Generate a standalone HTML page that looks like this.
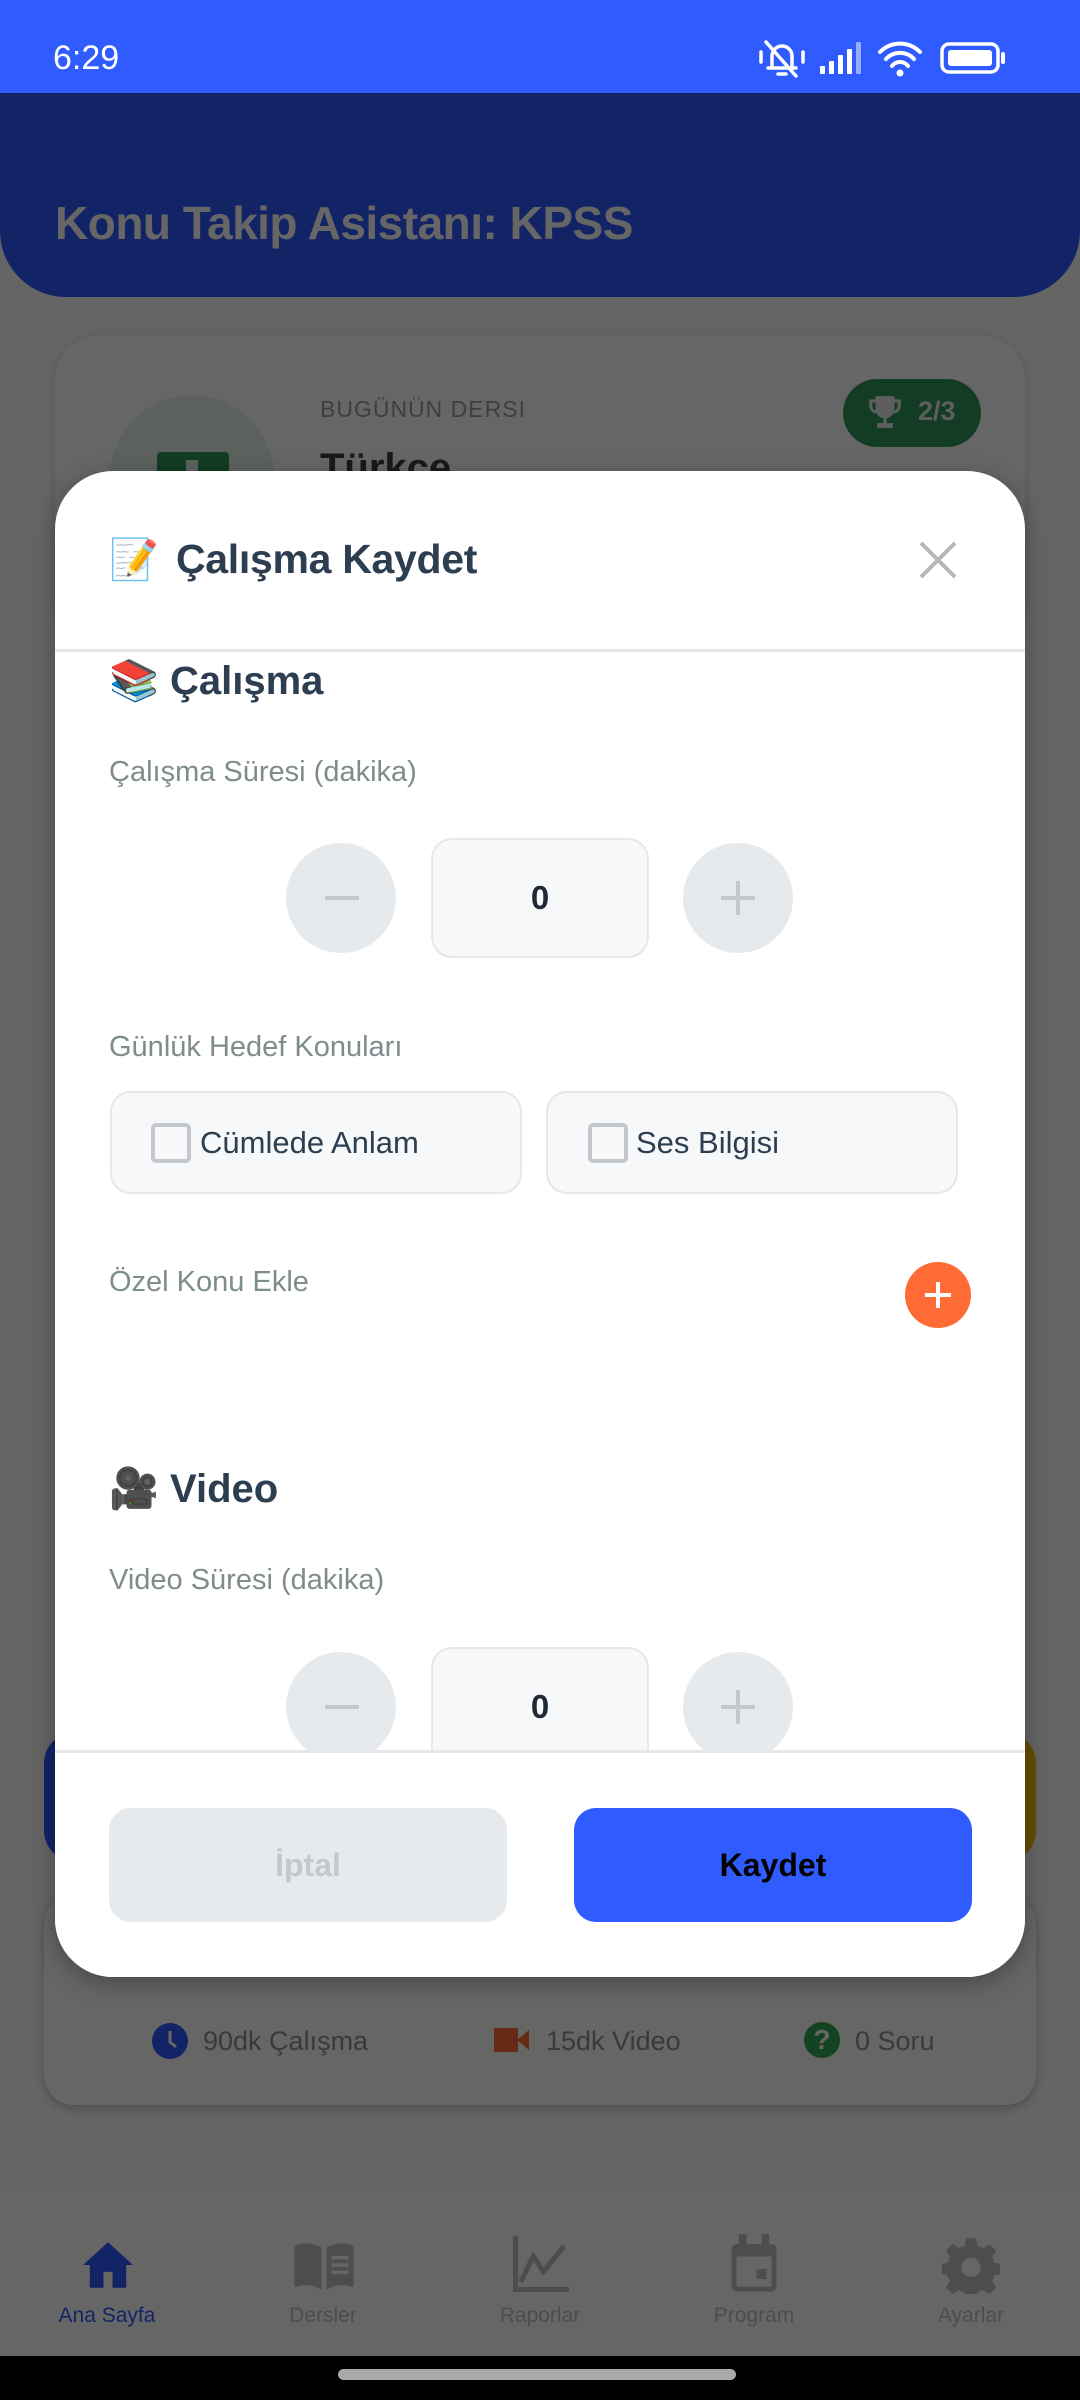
<!DOCTYPE html>
<html><head><meta charset="utf-8"><style>
*{margin:0;padding:0;box-sizing:border-box}
html,body{background:#fff}
body{width:1080px;height:2400px;position:relative;overflow:hidden;font-family:"Liberation Sans","Noto Sans CJK JP",sans-serif}
.a{position:absolute}
.t{white-space:nowrap}
</style></head><body>
<!-- underlying page -->
<div class="a" style="left:0;top:0;width:1080px;height:2400px;background:#fcfcfc"></div>
<div class="a" style="left:0;top:93px;width:1080px;height:204px;background:#2f5bff;border-radius:0 0 66px 66px"></div>
<div class="a t" style="left:55px;top:196px;font-size:46px;font-weight:bold;color:#fff;letter-spacing:-0.5px">Konu Takip Asistanı: KPSS</div>
<div class="a" style="left:55px;top:335px;width:970px;height:300px;background:#fff;border-radius:44px;box-shadow:0 2px 10px rgba(0,0,0,.15)"></div>
<div class="a" style="left:110px;top:395px;width:164px;height:164px;border-radius:50%;background:#e8f3ea"></div>
<div class="a" style="left:157px;top:452px;width:72px;height:40px;background:#2d9a5a;border-radius:4px"></div>
<div class="a" style="left:186px;top:460px;width:12px;height:40px;background:#e8f3ea"></div>
<div class="a t" style="left:320px;top:396px;font-size:23px;color:#9d9d9d;letter-spacing:1px">BUGÜNÜN DERSI</div>
<div class="a t" style="left:320px;top:446px;font-size:40px;font-weight:bold;color:#404040">Türkçe</div>
<div class="a" style="left:843px;top:379px;width:138px;height:68px;border-radius:34px;background:#2d9a5a"></div>
<svg class="a" style="left:866px;top:392px" width="38" height="40" viewBox="0 0 24 24"><path fill="#eaeaea" d="M6 2h12v2h4v4a5 5 0 0 1-5 5 6 6 0 0 1-4 3v3h4v3H7v-3h4v-3a6 6 0 0 1-4-3 5 5 0 0 1-5-5V4h4zM4 6v2a3 3 0 0 0 2 3V6zm16 0h-2v5a3 3 0 0 0 2-3z"/></svg>
<div class="a t" style="left:918px;top:396px;font-size:27px;font-weight:bold;color:#eaeaea">2/3</div>
<div class="a" style="left:44px;top:1733px;width:992px;height:128px;border-radius:30px;background:linear-gradient(90deg,#2f5bff 0 50%,#ffc107 50% 100%)"></div>
<div class="a" style="left:44px;top:1895px;width:992px;height:210px;background:#fff;border-radius:30px;box-shadow:0 3px 10px rgba(0,0,0,.25)"></div>
<svg class="a" style="left:151px;top:2022px" width="38" height="38" viewBox="0 0 38 38"><circle cx="19" cy="19" r="18" fill="#2f5bff"/><path d="M19 9V20L25 25" stroke="#fff" stroke-width="3" fill="none"/></svg>
<div class="a t" style="left:203px;top:2026px;font-size:27px;color:#919191">90dk Çalışma</div>
<svg class="a" style="left:494px;top:2026px" width="36" height="28" viewBox="0 0 36 28"><rect x="0" y="2" width="24" height="24" fill="#ff6b35"/><path d="M23 14L35 4V24z" fill="#ff6b35"/></svg>
<div class="a t" style="left:546px;top:2026px;font-size:27px;color:#919191">15dk Video</div>
<div class="a" style="left:804px;top:2022px;width:36px;height:36px;border-radius:50%;background:#34a853;color:#fff;font-size:28px;font-weight:bold;text-align:center;line-height:36px">?</div>
<div class="a t" style="left:855px;top:2026px;font-size:27px;color:#919191">0 Soru</div>
<div class="a" style="left:0;top:2190px;width:1080px;height:166px;background:#fff;border-top:1px solid #eee"></div>
<svg class="a" style="left:80px;top:2240px" width="56" height="50" viewBox="0 0 24 22"><path fill="#2f5bff" d="M12 1 L23 11 H20 V21 H14 V14 H10 V21 H4 V11 H1z"/></svg>
<svg class="a" style="left:292px;top:2240px" width="64" height="50" viewBox="0 0 26 20"><path fill="#c0c0c0" d="M1 2 Q7 0 12 3 V20 Q7 17 1 19z M14 3 Q19 0 25 2 V19 Q19 17 14 20z"/><path stroke="#fff" stroke-width="1.4" d="M16 7h7M16 10h7M16 13h7"/></svg>
<svg class="a" style="left:510px;top:2236px" width="62" height="56" viewBox="0 0 24 22"><path fill="none" stroke="#c0c0c0" stroke-width="2" d="M2 0V21H23 M4 18 L9 8 L13 14 L21 4"/></svg>
<svg class="a" style="left:728px;top:2234px" width="52" height="60" viewBox="0 0 20 24"><rect x="1" y="4" width="18" height="19" rx="2" fill="#c0c0c0"/><rect x="3" y="9" width="14" height="12" fill="#fff"/><rect x="4" y="0" width="3" height="6" fill="#c0c0c0"/><rect x="13" y="0" width="3" height="6" fill="#c0c0c0"/><rect x="11" y="14" width="4" height="4" fill="#c0c0c0"/></svg>
<svg class="a" style="left:942px;top:2236px" width="58" height="58" viewBox="0 0 24 24"><path fill="#c0c0c0" d="M10 1h4l.6 3 2.4 1 2.6-1.7 2.8 2.8L20.7 8.7l1 2.4 3 .6v4l-3 .6-1 2.4 1.7 2.6-2.8 2.8-2.6-1.7-2.4 1-.6 3h-4l-.6-3-2.4-1-2.6 1.7-2.8-2.8 1.7-2.6-1-2.4-3-.6v-4l3-.6 1-2.4L1.6 6.1 4.4 3.3 7 5l2.4-1z"/><circle cx="12" cy="13" r="4" fill="#fff"/></svg>
<div class="a t" style="left:0;top:2304px;width:214px;text-align:center;font-size:21px;color:#2f5bff">Ana Sayfa</div>
<div class="a t" style="left:216px;top:2304px;width:214px;text-align:center;font-size:21px;color:#c0c0c0">Dersler</div>
<div class="a t" style="left:433px;top:2304px;width:214px;text-align:center;font-size:21px;color:#c0c0c0">Raporlar</div>
<div class="a t" style="left:647px;top:2304px;width:214px;text-align:center;font-size:21px;color:#c0c0c0">Program</div>
<div class="a t" style="left:864px;top:2304px;width:214px;text-align:center;font-size:21px;color:#c0c0c0">Ayarlar</div>
<!-- dim overlay -->
<div class="a" style="left:0;top:0;width:1080px;height:2400px;background:rgba(0,0,0,0.6)"></div>
<!-- status bar -->
<div class="a" style="left:0;top:0;width:1080px;height:93px;background:#2f5bff"></div>
<div class="a t" style="left:53px;top:38px;font-size:34px;color:#fff;line-height:40px">6:29</div>
<svg class="a" style="left:758px;top:36px" width="260" height="44" viewBox="0 0 260 44">
 <g fill="none" stroke="#fff" stroke-width="3.5" stroke-linecap="round">
  <path d="M14 32 V20 a10 10 0 0 1 20 0 V32 H10 M38 32 H34"/><path d="M8 6 L38 40"/><path d="M3 16v10M45 16v10"/>
  <path d="M20 38h8"/>
 </g>
 <g fill="#fff"><rect x="62" y="30" width="5" height="8" rx="1"/><rect x="71" y="25" width="5" height="13" rx="1"/><rect x="80" y="19" width="5" height="19" rx="1"/><rect x="89" y="13" width="5" height="25" rx="1"/><rect x="98" y="6" width="5" height="32" rx="1" opacity=".5"/></g>
 <g fill="none" stroke="#fff" stroke-width="4" stroke-linecap="round">
  <path d="M122 16 a28 28 0 0 1 40 0"/><path d="M128 23 a19 19 0 0 1 28 0"/><path d="M134 30 a10 10 0 0 1 16 0"/>
 </g><circle cx="142" cy="37" r="3.5" fill="#fff"/>
 <rect x="184" y="8" width="56" height="28" rx="7" fill="none" stroke="#fff" stroke-width="3.5"/>
 <rect x="190" y="14" width="44" height="16" rx="3" fill="#fff"/>
 <rect x="243" y="16" width="4" height="12" rx="2" fill="#fff"/>
</svg>
<div class="a" style="left:0;top:2356px;width:1080px;height:44px;background:#000"></div>
<div class="a" style="left:338px;top:2369px;width:398px;height:11px;border-radius:6px;background:#aaa"></div>
<!-- modal -->
<div class="a" style="left:55px;top:471px;width:970px;height:1506px;background:#fff;border-radius:58px;overflow:hidden;box-shadow:0 6px 24px rgba(0,0,0,.3)">
 <div class="a t" style="left:54px;top:63px;font-size:40px;line-height:52px">📝</div>
 <div class="a t" style="left:121px;top:62px;font-size:41px;font-weight:bold;color:#2c3e50;line-height:52px;letter-spacing:-0.3px">Çalışma Kaydet</div>
 <svg class="a" style="left:863px;top:69px" width="40" height="40" viewBox="0 0 40 40"><path d="M3 3L37 37M37 3L3 37" stroke="#b4b8bb" stroke-width="4"/></svg>
 <div class="a" style="left:0;top:178px;width:970px;height:3px;background:#e5e7eb"></div>
 <div class="a t" style="left:54px;top:184px;font-size:40px;line-height:52px">📚</div>
 <div class="a t" style="left:115px;top:184px;font-size:40px;font-weight:bold;color:#2c3e50;line-height:52px">Çalışma</div>
 <div class="a t" style="left:54px;top:285px;font-size:29px;color:#7f8c8d">Çalışma Süresi (dakika)</div>
 <div class="a" style="left:231px;top:372px;width:110px;height:110px;border-radius:50%;background:#e7eaed"></div>
 <div class="a" style="left:270px;top:425px;width:34px;height:4px;background:#c4c8cc"></div>
 <div class="a" style="left:376px;top:367px;width:218px;height:120px;border-radius:21px;background:#f7f8fa;border:2px solid #e5e7eb;text-align:center;line-height:116px;font-size:33px;font-weight:bold;color:#1f2937">0</div>
 <div class="a" style="left:628px;top:372px;width:110px;height:110px;border-radius:50%;background:#e7eaed"></div>
 <div class="a" style="left:666px;top:425px;width:34px;height:4px;background:#c4c8cc"></div>
 <div class="a" style="left:681px;top:410px;width:4px;height:34px;background:#c4c8cc"></div>
 <div class="a t" style="left:54px;top:560px;font-size:29px;color:#7f8c8d">Günlük Hedef Konuları</div>
 <div class="a" style="left:55px;top:620px;width:412px;height:103px;border-radius:21px;background:#f7f8fa;border:2px solid #e5e7eb"></div>
 <div class="a" style="left:96px;top:652px;width:40px;height:40px;border-radius:5px;border:4px solid #c4c8cc;background:#f7f8fa"></div>
 <div class="a t" style="left:145px;top:652px;font-size:31px;color:#2c3e50;line-height:40px">Cümlede Anlam</div>
 <div class="a" style="left:491px;top:620px;width:412px;height:103px;border-radius:21px;background:#f7f8fa;border:2px solid #e5e7eb"></div>
 <div class="a" style="left:533px;top:652px;width:40px;height:40px;border-radius:5px;border:4px solid #c4c8cc;background:#f7f8fa"></div>
 <div class="a t" style="left:581px;top:652px;font-size:31px;color:#2c3e50;line-height:40px">Ses Bilgisi</div>
 <div class="a t" style="left:54px;top:795px;font-size:29px;color:#7f8c8d">Özel Konu Ekle</div>
 <div class="a" style="left:850px;top:791px;width:66px;height:66px;border-radius:50%;background:#ff6b35"></div>
 <div class="a" style="left:870px;top:822px;width:26px;height:4px;background:#fff"></div>
 <div class="a" style="left:881px;top:811px;width:4px;height:26px;background:#fff"></div>
 <div class="a t" style="left:54px;top:992px;font-size:40px;line-height:52px">🎥</div>
 <div class="a t" style="left:115px;top:992px;font-size:40px;font-weight:bold;color:#2c3e50;line-height:52px">Video</div>
 <div class="a t" style="left:54px;top:1093px;font-size:29px;color:#7f8c8d">Video Süresi (dakika)</div>
 <div class="a" style="left:231px;top:1181px;width:110px;height:110px;border-radius:50%;background:#e7eaed"></div>
 <div class="a" style="left:270px;top:1234px;width:34px;height:4px;background:#c4c8cc"></div>
 <div class="a" style="left:376px;top:1176px;width:218px;height:120px;border-radius:21px;background:#f7f8fa;border:2px solid #e5e7eb;text-align:center;line-height:116px;font-size:33px;font-weight:bold;color:#1f2937">0</div>
 <div class="a" style="left:628px;top:1181px;width:110px;height:110px;border-radius:50%;background:#e7eaed"></div>
 <div class="a" style="left:666px;top:1234px;width:34px;height:4px;background:#c4c8cc"></div>
 <div class="a" style="left:681px;top:1219px;width:4px;height:34px;background:#c4c8cc"></div>
 <div class="a" style="left:0;top:1279px;width:970px;height:227px;background:#fff;border-top:3px solid #e5e7eb"></div>
 <div class="a" style="left:54px;top:1337px;width:398px;height:114px;border-radius:22px;background:#e7eaed;text-align:center;line-height:114px;font-size:32px;font-weight:bold;color:#c4c8cc">İptal</div>
 <div class="a" style="left:519px;top:1337px;width:398px;height:114px;border-radius:22px;background:#2f5bff;text-align:center;line-height:114px;font-size:32px;font-weight:bold;color:#000">Kaydet</div>
</div>
</body></html>
